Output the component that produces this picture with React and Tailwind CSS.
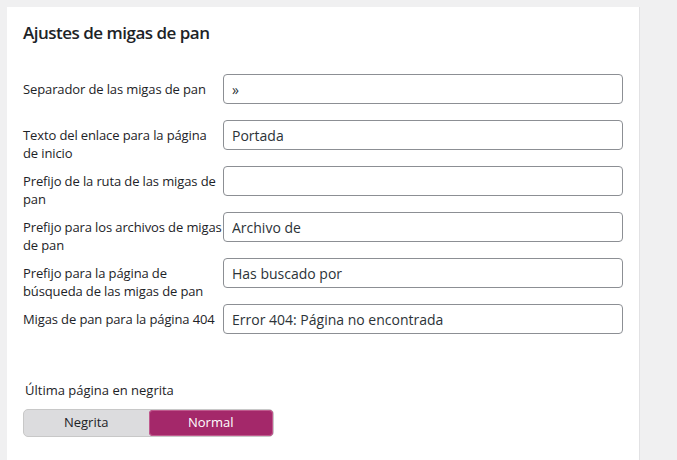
import React, { useState } from "react";

const fields = [
  { label: "Separador de las migas de pan", value: "»" },
  { label: "Texto del enlace para la página de inicio", value: "Portada" },
  { label: "Prefijo de la ruta de las migas de pan", value: "" },
  { label: "Prefijo para los archivos de migas de pan", value: "Archivo de" },
  { label: "Prefijo para la página de búsqueda de las migas de pan", value: "Has buscado por" },
  { label: "Migas de pan para la página 404", value: "Error 404: Página no encontrada" },
];

export default function App() {
  const [bold, setBold] = useState(false);

  return (
    <div className="min-h-[460px] bg-[#f0f0f1] pl-[7px] pt-[7px] font-['Open_Sans',sans-serif] text-[#1d2327]">
      <div className="w-[632px] min-h-[453px] bg-white pl-[16px] pt-[14px] shadow-[1px_0_0_#e2e2e4]">
        <h2 className="text-[17px] font-semibold leading-[24px] tracking-[-0.5px]">Ajustes de migas de pan</h2>

        <div className="mt-[29px]">
          {fields.map((f) => (
            <div key={f.label} className="flex h-[46px]">
              <label className="w-[200px] pt-[6px] text-[13px] leading-[18px] tracking-[-0.12px]">{f.label}</label>
              <input
                type="text"
                defaultValue={f.value}
                className="h-[30px] w-[400px] rounded-[4px] border border-[#8c8f94] px-[8px] text-[14px] text-[#2c3338] outline-none"
              />
            </div>
          ))}
        </div>

        <div className="mt-[31px] pl-[2px] text-[13px] leading-[18px]">Última página en negrita</div>
        <div className="mt-[10px] flex h-[28px] w-[251px] rounded-[5px] border border-[#c8c8c8] bg-[#dcdcde] text-[13px]">
          <button
            onClick={() => setBold(true)}
            className={
              bold
                ? "flex-1 rounded-[4px] bg-[#a4286a] text-white shadow-[inset_0_0_0_1px_#c05a8e]"
                : "flex-1 text-[#1d2327]"
            }
          >
            Negrita
          </button>
          <button
            onClick={() => setBold(false)}
            className={
              bold
                ? "flex-1 text-[#1d2327]"
                : "flex-1 rounded-[4px] bg-[#a4286a] text-white shadow-[inset_0_0_0_1px_#c05a8e]"
            }
          >
            Normal
          </button>
        </div>
      </div>
    </div>
  );
}
